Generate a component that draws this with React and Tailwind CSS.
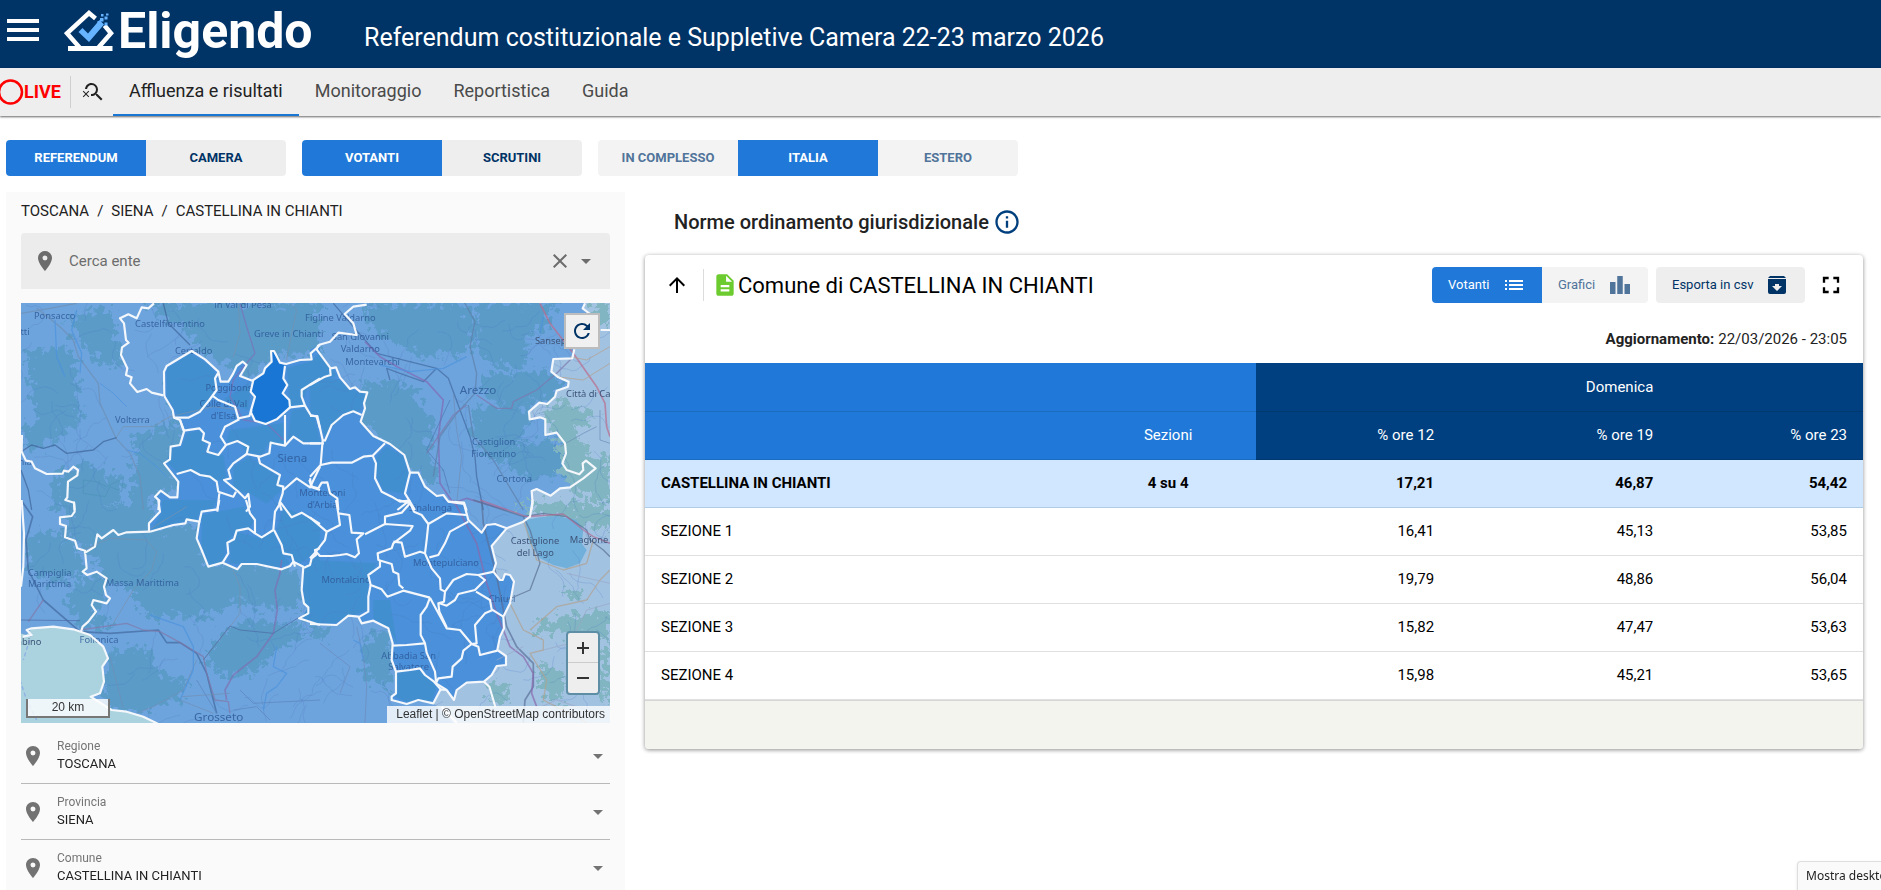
import React from "react";
import {
  MdArrowDropDown,
  MdArrowUpward,
  MdClose,
  MdDescription,
  MdFullscreen,
  MdInfoOutline,
  MdLeaderboard,
  MdList,
  MdPlace,
  MdRefresh,
  MdSearchOff,
} from "react-icons/md";

function Logo() {
  return (
    <svg className="h-[42px] w-[50px] shrink-0" viewBox="0 0 50 42" fill="none" aria-hidden="true">
      <path d="M31.500 8.500 25 3 3 23.300 16 38M40.500 15.500 47 23.300 34 38" stroke="#fff" strokeWidth="4.500" />
      <path d="M4 36h44.500v5H4z" fill="#fff" />
      <path d="m14.500 22 4-4 5.500 5.500L35.500 10l4.500 4.500L25 32z" fill="#66b3ff" />
      <path d="M36 8h3.500v3.500H36zM40.500 12.500h3v3h-3zM37 4h2.500v2.500H37zM40.500 6.500h3v3h-3zM42 3.500h2.500v2H42zM33.500 11h3v3h-3z" fill="#66b3ff" />
    </svg>
  );
}

function ArchiveDown({ className }) {
  return (
    <svg className={className} viewBox="0 0 24 24" fill="currentColor" aria-hidden="true">
      <path d="M5 3h14l2 2H3zM3 6h18v13a2 2 0 0 1-2 2H5a2 2 0 0 1-2-2zm7 5v2H7l5 5 5-5h-3v-2z" />
    </svg>
  );
}

const tabs = ["Affluenza e risultati", "Monitoraggio", "Reportistica", "Guida"];

const toggles = [
  [["REFERENDUM", true], ["CAMERA", false]],
  [["VOTANTI", true], ["SCRUTINI", false]],
  [["IN COMPLESSO", null], ["ITALIA", true], ["ESTERO", null]],
];

const tone = (on) =>
  on ? "bg-[#2079d8] text-white" : on === false ? "bg-[#eeeeee] text-[#003366]" : "bg-[#f3f3f3] text-[#50749a]";

/* The map is drawn on four sheets that share one canvas of 1767 x 1260 units. */
const woodsNW = [
  "M80 200 150 170 215 190 240 300 220 350 260 380 180 440 120 470 63 480 63 440 110 380 90 300z",
  "M430 40 960 40 960 190 880 205 830 190 760 260 690 230 600 190 560 110 500 90z",
  "M200 90 330 50 360 160 370 230 300 220 240 150z",
  "M400 440 540 390 550 460 490 520 530 560 530 620 470 600 440 660 380 660 400 560z",
  "M160 560 250 520 370 570 360 640 240 660 160 660z",
  "M500 240 640 240 640 320 560 380 520 370z",
];
const woodsNE = [
  "M160 40 460 40 500 110 470 190 350 200 250 160 180 110z",
  "M500 40 740 40 700 110 640 170 650 230 560 230 500 180z",
  "M160 270 300 290 370 400 350 480 400 560 350 590 300 530 200 440 150 390z",
  "M480 360 620 330 660 390 620 470 720 440 760 500 750 560 640 560 560 510 500 470z",
  "M520 250 720 250 770 280 700 340 640 350 560 330 510 300z",
];
const woodsSW = [
  "M75 110 180 90 240 150 250 220 160 250 90 210z",
  "M200 20 470 20 440 95 600 70 610 190 900 200 900 330 700 310 620 350 440 350 400 280 320 240 260 140 200 110z",
  "M200 290 250 220 320 240 320 310 270 340 330 350 320 390 240 390z",
  "M320 460 440 440 480 520 560 540 540 600 420 640 330 620 300 590 310 500z",
  "M640 420 760 350 850 380 900 350 910 420 830 450 760 520 670 530 620 480z",
];
const woodsSE = [
  "M180 400 240 390 250 510 240 570 180 540 150 470z",
  "M0 380 30 370 60 400 20 420z",
];
const woodsOut = [
  "M690 370 760 330 860 380 790 430 850 500 900 500 900 640 780 600 750 540 740 440z",
  "M840 40 900 40 900 110 850 100z",
];
const woodsOutSouth = [
  "M600 20 760 0 900 20 900 90 780 70 690 40z",
  "M760 350 900 330 900 420 760 400 650 400 700 370z",
  "M690 490 770 520 760 600 730 620 690 560z",
  "M540 540 600 560 590 610 540 610z",
  "M860 450 900 440 900 620 880 600z",
  "M760 260 820 280 800 300 770 290z",
];

const edgeNW = [
  "M462 40 445 55 425 52 410 85 385 73 360 85 372 100 378 150 386 158 366 172 363 195 382 235 378 255 395 262 390 280 412 306 440 297 455 308 490 316",
  "M66 435 65 485 78 512 95 515 105 535 140 552 188 551 192 542 205 545 220 530 234 540 232 556 204 575 202 622 196 630 222 638 224 660",
];
const edgeNE =
  "M825 40 818 55 840 72M900 120 872 120M793 178 787 205 730 207 724 245 745 262 776 275 774 290 740 302 735 320 712 342 688 338 657 365 659 388 690 382 706 388 706 435 740 428 765 460 768 490 757 520 770 540 808 553 820 540 818 520 828 512 857 535 820 565 780 592 750 595 722 617 680 597 665 603 668 640 664 662";
const siena = {
  nw: "M493 318 492 245 500 228 575 183 615 208 655 245 662 275 685 275 700 250 710 228 728 215 740 225 720 258 757 272 790 250 795 235 815 215 813 183 822 183 840 218 858 222 900 210 935 208 932 190 960 165",
  ne: "M25 165 60 155 85 128 140 135 130 100 104 72 130 50 170 44",
  east: "M20 178 62 235 78 232 90 262 120 297 135 292 150 305 172 307 162 340 165 355 152 395 190 438 240 462 283 495 300 548 325 548 345 590 380 618 400 615 415 635 462 638 470 662",
  se: "M415 5 462 12 475 60 515 98 530 75 555 72 590 85 545 138 558 190 550 215 570 240 578 240 585 222 600 225 612 245 600 310 580 350 582 385 570 410 562 450 588 468 588 495 560 498 545 525 522 545 470 548 440 570 432 600 410 570 392 568 370 610 325 600 290 612 245 600 245 590 258 580 258 515 245 480 248 430 235 385 190 362 155 370 145 350 115 347 80 375 0 372",
  sw: "M960 375 897 355 925 340 925 322 912 310 905 270 910 200 880 185 870 198 845 208 770 192 725 192 712 208 668 188 625 200 605 150 590 115 598 65 560 58 556 70 520 75 450 95",
  west: "M475 660 478 632 465 620 482 602 510 622 532 622 535 575 492 520 510 508 512 470 540 465 552 425 540 390 522 383 518 360 493 318",
};
const inner = {
  nw: [
    "M522 383 565 383 600 365 628 330 650 300 645 265 655 248M636 316 655 330 705 350 715 385 748 378 755 360",
    "M855 228 850 265 862 285 848 310 868 330 870 352 830 388 797 402 765 392 752 365 765 320 752 305 760 270",
    "M540 390 552 422 598 415 612 430 608 450 630 460 622 485 655 495 678 465 662 440 675 410 718 388",
    "M678 465 712 453 745 470 740 492 780 500 808 490 812 458 855 467 855 375M870 352 915 347 932 375 950 380 960 415M855 467 880 440 910 460 960 460",
    "M740 492 700 520 685 540 692 565 672 570 715 605 735 625 745 612 750 650 738 665M775 500 780 520 840 555 832 585 850 590 848 610 838 640 845 662",
    "M530 552 572 540 600 555 630 560 650 575 655 605 700 620 708 605M658 610 652 665M850 600 890 565 930 592 955 540 960 530M960 265 905 300 905 320 915 347",
    "M928 570 935 592 960 600",
  ],
  ne: [
    "M0 285 45 260 62 255 60 235M0 378 22 378 38 450 45 452 65 405 100 375 130 364 155 375M38 450 32 525 0 560",
    "M0 460 42 460M32 525 65 518 125 518 160 500 188 497 225 460M188 497 198 520 195 565 215 605 245 620 270 635 298 632 262 660",
    "M300 548 285 610 298 632 315 660M0 565 5 590 25 595 35 578 52 577 60 610 82 625 85 660",
  ],
  sw: [
    "M475 0 480 35 447 70 447 96M658 0 652 28 605 35 597 70M738 0 750 40 765 60 765 100 785 112 820 90 825 35 842 8 875 52 905 38 960 72",
    "M765 100 745 85 710 92 702 118 682 128 685 160 668 188M822 90 845 135 850 160 875 165 885 200M912 203 930 195 935 175 948 165 945 150 960 145",
  ],
  se: [
    "M0 52 50 95 45 120 18 155 30 168 65 168 90 165 110 162 135 172 147 160 140 118 160 100 125 98 118 45 85 40 90 75 50 95M85 40 78 0",
    "M18 155 0 175M165 103 225 72 308 78 300 92 250 130 245 145 203 160 205 180 245 192 250 215 265 222 268 255 280 265M210 180 210 200 175 225 182 255 215 268 232 290 280 272 360 293",
    "M250 125 275 128 285 170 330 155 345 160 350 120 355 72 410 40 470 45M298 5 312 35 335 45 355 72M225 72 225 50 275 38 300 10 265 0M358 172 385 165 405 130 420 95 475 65",
    "M345 160 365 205 390 235 392 268 405 275 430 240 470 222 505 225 525 240 495 270 445 282 435 300 410 317 385 308M405 275 402 305 385 310 388 335 410 382M498 275 540 300 545 328 580 350M505 225 552 215",
    "M360 293 350 320 332 345 332 405 345 430 350 458 375 515 378 545M360 293 380 330 410 385 450 390 485 432 500 430 495 375 525 340 548 330M485 432 460 452 455 475 428 500 425 530 385 535 378 550 410 570",
    "M485 432 505 440 510 465 562 452M248 437 290 435 343 430M258 515 300 510 330 505 345 525 372 545 392 568M182 255 175 290 175 335 145 352M522 545 538 560 550 600 556 622M395 620 440 668",
  ],
};

const roads = {
  nw: [
    ["M63 70 150 55 230 40M110 55 180 110 220 150 235 200 295 280 300 340 348 445 390 490 420 560 430 660", "#6e8eb4", 4],
    ["M490 40 505 100 570 165", "#3d6499", 4],
    ["M63 485 95 465 130 475 165 465 200 490 280 480 310 455 350 443", "#3d6499", 4],
    ["M720 40 740 110 765 190 735 225 700 270 690 320 730 390 800 400 850 450", "#7d70b8", 4],
    ["M350 440 370 410 460 410 510 380 640 350 720 360M870 40 890 60 865 180 860 210M715 40 720 130 700 200", "#7791ae", 3],
    ["M165 90 170 200 195 260M230 60 215 120 245 190 240 250", "#4c93dd", 4],
    ["M300 280 340 310 380 350M380 480 420 490 470 530 500 560", "#4c93dd", 3],
    ["M63 540 85 600 95 660", "#3d6499", 4],
    ["M250 570 290 575 320 590 370 565 365 605 330 590 315 620 250 610z", "#4f93b8", 3],
  ],
  ne: [
    ["M70 40 130 110 200 190 380 235 415 265 480 440 495 500 500 560 520 660M380 235 340 275 270 250 230 235 240 270", "#42699f", 4],
    ["M165 155 210 200 270 235 350 275 400 330 385 440 390 580 430 640 470 625 590 660", "#8069b5", 5],
    ["M465 40 495 95 480 170 500 250 495 310 440 370 390 440 370 560M475 345 490 440 550 510 640 660", "#5c7fa8", 4],
    ["M690 40 720 100 790 190 860 290 885 340 890 410 900 440", "#bb6c8c", 5],
    ["M500 315 560 355 605 355 610 335 680 300 740 250 790 200M350 490 430 375 470 345", "#7c78ac", 4],
    ["M870 360 870 450 900 460M750 470 820 430 860 410M430 310 440 420 455 500 440 640", "#6d8fb8", 3],
    ["M740 260 820 270 900 220M780 200 830 210 900 170", "#b5a08a", 3],
    ["M210 225 300 245 400 235 470 200M700 80 690 130", "#4c93dd", 4],
    ["M350 480 420 330M350 480 400 540 420 610", "#4f78b2", 3],
  ],
  sw: [
    ["M63 0 98 50 78 120 85 210 130 300 240 395 330 400 475 390 500 428 540 428 590 460 620 520 650 640", "#42699f", 5],
    ["M85 365 130 300M240 390 380 370 430 390 480 395 545 430 610 470 620 520 645 600 685 605 690 640", "#8078a8", 4],
    ["M845 180 840 220 825 270 832 330 820 400 770 470 700 525 675 570 680 600", "#7d70b0", 5],
    ["M250 150 330 115 440 120 470 155 455 210 400 270 340 370M560 20 430 100M700 210 720 260 720 340 690 380 610 480", "#7791ae", 3],
    ["M610 480 690 378 720 390 820 400 900 350M63 360 240 362", "#4d6ca4", 3],
    ["M330 470 370 625M410 640 460 620 550 570 590 480M545 590 690 580M540 600 640 640", "#718eb5", 3],
    ["M450 345 550 380 580 440 580 510 540 600M830 440 820 500 860 520 830 560 800 580 790 630", "#4c93dd", 4],
    ["M590 540 650 640M720 570 760 610 960 600M700 630 770 620 810 660", "#5c84be", 3],
  ],
  se: [
    ["M515 0 520 70 560 230 590 380 620 440 670 490 670 560 645 600 640 668", "#586f98", 5],
    ["M430 0 500 130 530 250 560 340 600 440 640 470 670 520 665 580 680 620", "#8a69ad", 5],
    ["M490 0 640 50 660 90 690 190 660 270 590 300M640 50 700 40 770 50 830 90 840 120 880 150 900 170", "#596f92", 4],
    ["M510 0 650 50 760 42 820 90 850 110 900 130", "#b06c95", 4],
    ["M600 310 640 390 700 420 700 450 660 460 710 540 700 600 830 668M660 390 740 320 830 300 870 240 900 210M640 60 680 180 760 210 830 190 850 120", "#b1a18f", 4],
    ["M650 640 740 600 860 640M560 480 640 440M700 450 780 430 830 330 900 310M770 220 900 250", "#9aa8c6", 3],
    ["M140 380 160 470 170 560 165 668M30 430 120 500 90 580", "#6b8bbb", 3],
    ["M160 480 150 430 130 420", "#4c93dd", 4],
  ],
};

const labels = [
  [164, 88, 28, "Ponsacco"], [75, 134, 28, "tti"], [510, 110, 28, "Castelfiorentino"], [729, 55, 28, "in Val di Pesa"],
  [581, 192, 28, "Certaldo"], [866, 142, 28, "Greve in Chianti"], [1021, 93, 28, "Figline Valdarno"], [1081, 150, 28, "San Giovanni"],
  [1081, 186, 28, "Valdarno"], [1118, 225, 28, "Montevarchi"], [690, 304, 28, "Poggibonsi"], [670, 350, 28, "Colle di Val"],
  [670, 386, 28, "d'Elsa"], [397, 398, 28, "Volterra"], [877, 516, 35, "Siena"], [76, 524, 28, "nia"],
  [1434, 312, 35, "Arezzo"], [1481, 464, 28, "Castiglion"], [1481, 500, 28, "Fiorentino"], [1543, 575, 28, "Cortona"],
  [967, 617, 28, "Monteroni"], [967, 653, 28, "d'Arbia"], [1291, 662, 28, "Sinalunga"], [149, 857, 28, "Campiglia"],
  [149, 892, 28, "Marittima"], [427, 888, 28, "Massa Marittima"], [297, 1060, 28, "Follonica"], [656, 1294, 35, "Grosseto"],
  [1338, 827, 28, "Montepulciano"], [1038, 878, 28, "Montalcino"], [1506, 936, 28, "Chiusi"], [1226, 1106, 28, "Abbadia San"],
  [1226, 1141, 28, "Salvatore"],
];
const outerLabels = [
  [1685, 161, 28, "Sansepolcro"], [1800, 320, 28, "Città di Castello"], [1605, 763, 28, "Castiglione"], [1606, 798, 28, "del Lago"],
  [1767, 759, 28, "Magione"], [82, 1065, 28, "mbino"],
];

/* Minor streets: a repeatable web of short bent lines. */
function minorStreets() {
  let seed = 17;
  const rnd = () => {
    seed = (seed * 16807) % 2147483647;
    return seed / 2147483647;
  };
  let d = "";
  for (let i = 0; i < 230; i++) {
    let x = 63 + rnd() * 1767;
    let y = 39 + rnd() * 1260;
    let a = rnd() * 6.3;
    d += `M${Math.round(x)} ${Math.round(y)}`;
    for (let k = 0; k < 9; k++) {
      a += (rnd() - 0.5) * 1.5;
      x += Math.cos(a) * 15;
      y += Math.sin(a) * 15;
      d += `L${Math.round(x)} ${Math.round(y)}`;
    }
  }
  return d;
}
const streets = minorStreets();

const S = { nw: undefined, ne: "translate(930 0)", sw: "translate(0 630)", se: "translate(930 630)" };

function Woods({ sheet, shapes, fill }) {
  return (
    <g transform={S[sheet]} fill={fill}>
      {shapes.map((d) => <path key={d} d={d} />)}
    </g>
  );
}

function TuscanyMap() {
  return (
    <svg className="block h-full w-full" viewBox="63 39 1767 1260" preserveAspectRatio="xMidYMid slice" role="img" aria-label="Mappa della provincia di Siena">
      <defs>
        <filter id="ragged" x="-10%" y="-10%" width="120%" height="120%">
          <feTurbulence type="fractalNoise" baseFrequency="0.045" numOctaves="4" seed="8" result="n" />
          <feDisplacementMap in="SourceGraphic" in2="n" scale="90" xChannelSelector="R" yChannelSelector="G" />
        </filter>
      </defs>
      <rect x="63" y="39" width="1767" height="1260" fill="#6ea4dd" />
      <g filter="url(#ragged)">
        <Woods sheet="nw" shapes={woodsNW} fill="#5a9bc8" />
        <Woods sheet="ne" shapes={woodsNE} fill="#5a9bc8" />
        <Woods sheet="sw" shapes={woodsSW} fill="#5a9bc8" />
        <Woods sheet="se" shapes={woodsSE} fill="#5a9bc8" />
      </g>
      <g fill="#a2c2e2">
        <path transform={S.ne} d={"M910 30 825 30 818 55 840 72 793 178" + edgeNE.slice(edgeNE.indexOf("M793") + 8) + "L910 662z"} />
        <path transform={S.se} d="M668 0 660 50 640 65 590 85 545 138 558 190 550 215 570 240 585 222 600 225 612 245 600 310 580 350 582 385 562 450 588 468 588 495 560 498 545 525 522 545 470 548 440 570 432 600 410 570 392 568 370 610 440 680 910 680 910 0z" />
      </g>
      <g filter="url(#ragged)">
        <Woods sheet="ne" shapes={woodsOut} fill="#80b5c1" />
        <Woods sheet="se" shapes={woodsOutSouth} fill="#80b5c1" />
      </g>
      <path transform={S.se} d="M645 60 690 52 740 48 800 60 820 90 815 130 830 150 810 190 770 205 730 195 690 175 655 120z" fill="#72b0dc" />
      <g fill="#4a90da">
        <path d={siena.nw + "L960 760 475 660 478 632 465 620 482 602 510 622 532 622 535 575 492 520 510 508 512 470 540 465 552 425 540 390 522 383 518 360z"} />
        <path transform={S.ne} d="M25 165 20 178 62 235 78 232 90 262 120 297 135 292 150 305 172 307 162 340 165 355 152 395 190 438 240 462 283 495 300 548 325 548 345 590 380 618 400 615 415 635 462 638 470 700 0 700 0 180z" />
        <path transform={S.se} d={siena.se.replace("M415 5", "M0 0L415 5") + "z"} />
        <path transform={S.sw} d={siena.sw + "L447 70 480 35 475 0 960 0z"} />
      </g>
      <g fill="#428fcf">
        <path d="M500 235 570 190 630 225 650 260 640 310 610 360 535 380 500 320z" />
        <path d="M745 280 752 300 745 360 700 340 670 330 700 310zM860 235 930 215 960 190 990 230 1010 255 920 295 905 345 870 345z" />
        <path d="M560 430 600 420 615 455 620 490 670 495 680 570 640 570 570 545 535 550 500 515 515 475 545 470z" />
        <path d="M690 420 850 400 850 460 800 465 790 495 740 490 720 455 680 455z" />
        <path d="M875 360 920 355 945 385 960 455 910 455 880 435 862 450z" />
        <path d="M700 530 750 500 775 520 835 560 845 600 800 640 750 610 700 600z" />
        <path transform={S.ne} d="M0 290 60 265 90 270 120 297 150 308 168 312 150 360 90 375 45 440 20 370 0 375zM200 500 230 470 280 500 295 550 280 610 220 600 200 560z" />
        <path transform={S.sw} d="M485 0 650 0 640 25 600 35 590 60 520 70 455 90 485 40zM605 45 730 20 760 60 750 85 710 90 680 130 670 185 625 195 605 140zM690 130 710 95 780 115 820 95 850 165 870 190 840 200 690 190zM850 150 830 90 850 20 960 70 960 150 900 190 860 170z" />
        <path transform={S.sw} d="M912 205 960 160 960 370 905 355 925 320 910 300z" />
        <path transform={S.se} d="M0 180 200 190 175 240 170 330 130 345 70 370 0 370zM190 300 240 300 260 430 245 400 190 355zM262 520 330 510 380 560 365 605 290 605 255 590z" />
      </g>
      <path d={streets} fill="none" stroke="#4d79c4" strokeOpacity="0.28" strokeWidth="2.500" />
      <g fill="none" strokeOpacity="0.7" strokeLinejoin="round">
        {Object.keys(roads).map((k) => (
          <g key={k} transform={S[k]}>
            {roads[k].map(([d, c, w]) => <path key={d} d={d} stroke={c} strokeWidth={w} />)}
          </g>
        ))}
      </g>
      <g transform={S.sw}>
        <path d="M60 400 80 405 95 385 160 380 220 388 270 405 310 440 324 475 307 500 312 545 300 580 272 590 335 630 380 635 430 650 480 680 55 680z" fill="#aad3df" />
        <path d="M95 400 70 480M60 540 80 600 110 660" fill="none" stroke="#8fb0e4" strokeWidth="4" strokeDasharray="12 8" />
      </g>
      <g fontFamily='"Noto Sans", sans-serif' textAnchor="middle">
        {labels.map(([x, y, s, t]) => <text key={t} x={x} y={y} fontSize={s} fill="#2f5a99" fillOpacity="0.85">{t}</text>)}
        {outerLabels.map(([x, y, s, t]) => <text key={t} x={x} y={y} fontSize={s} fill="#3d5478">{t}</text>)}
      </g>
      <path d="M855 228 850 265 862 285 848 310 868 330 870 352 830 388 797 402 765 392 752 365 765 320 752 305 760 270 790 250 795 235 815 215 818 183 840 218z" fill="#1976d5" />
      <g fill="none" stroke="#f4f7fb" strokeWidth="6.500" strokeLinejoin="round">
        <g>
          {edgeNW.map((d) => <path key={d} d={d} />)}
          <path d={siena.nw} />
          <path d={siena.west} />
          {inner.nw.map((d) => <path key={d} d={d} />)}
        </g>
        <g transform={S.ne}>
          <path d={edgeNE} />
          <path d={siena.ne} />
          <path d={"M25 165" + siena.east.replace("M", "L")} />
          {inner.ne.map((d) => <path key={d} d={d} />)}
        </g>
        <g transform={S.sw}>
          <path d="M222 5 224 35 215 48 180 52 180 72 198 78 195 112 225 122 232 145 255 152 260 205 248 215 262 225 290 215 320 235 312 260 318 285 330 295 320 310 280 300 275 315 288 335 265 365 248 380 243 395M252 160 285 140 292 103 305 115 340 90 355 105 380 97 450 95" />
          <path d="M65 0 72 100 70 200 63 260M68 410 95 405 80 390 95 385 160 380 220 388 270 405 310 440 324 475 307 500 312 545 300 580 272 590 335 630 380 635 430 650 475 672" />
          <path d={siena.sw} />
          {inner.sw.map((d) => <path key={d} d={d} />)}
        </g>
        <g transform={S.se}>
          <path d={siena.se} />
          <path d="M668 0 660 50 640 65 590 85" />
          {inner.se.map((d) => <path key={d} d={d} />)}
        </g>
      </g>
    </svg>
  );
}

function Place({ label, value }) {
  const id = label.toLowerCase();
  return (
    <div className="relative flex h-14 shrink-0 items-center border-b border-[#b9b9b9]">
      <MdPlace className="size-6 shrink-0 text-[#737373]" />
      <div className="flex min-w-0 flex-1 flex-col pl-3">
        <label htmlFor={id} className="text-xs leading-4 text-[#757575]">{label}</label>
        <select id={id} className="h-5 w-full appearance-none bg-transparent text-[13px] leading-5 text-[#222]">
          <option>{value}</option>
        </select>
      </div>
      <MdArrowDropDown className="pointer-events-none absolute right-0 size-6 text-[#737373]" />
    </div>
  );
}

const rows = [
  ["CASTELLINA IN CHIANTI", "4 su 4", "17,21", "46,87", "54,42"],
  ["SEZIONE 1", "", "16,41", "45,13", "53,85"],
  ["SEZIONE 2", "", "19,79", "48,86", "56,04"],
  ["SEZIONE 3", "", "15,82", "47,47", "53,63"],
  ["SEZIONE 4", "", "15,98", "45,21", "53,65"],
];

function Results() {
  return (
    <section className="overflow-hidden rounded bg-white shadow-[0_1px_4px_rgba(0,0,0,0.45)]">
      <div className="flex h-[60px] items-center px-4">
        <button type="button" aria-label="Livello superiore" className="mr-[10px] flex w-8 justify-center text-black">
          <MdArrowUpward className="size-6" />
        </button>
        <div className="h-8 border-l border-[#dcdcdc]" />
        <MdDescription className="ml-2 size-[26px] text-[#6ccb2f]" />
        <h2 className="text-[22px] text-black">Comune di CASTELLINA IN CHIANTI</h2>
        <div className="ml-auto flex items-center text-[13px]">
          <button type="button" className="flex h-9 w-[110px] items-center justify-between rounded-l bg-[#2079d8] px-4 text-white">
            Votanti <MdList className="size-6" />
          </button>
          <button type="button" className="flex h-9 w-[106px] items-center justify-between rounded-r bg-[#f3f3f3] px-4 text-[#50749a]">
            Grafici <MdLeaderboard className="size-6" />
          </button>
          <button type="button" className="ml-2 flex h-9 w-[149px] items-center justify-between rounded bg-[#eeeeee] px-4 text-[#003366]">
            Esporta in csv <ArchiveDown className="size-6" />
          </button>
          <button type="button" aria-label="Schermo intero" className="ml-3 pr-0.5 text-black">
            <MdFullscreen className="size-7" />
          </button>
        </div>
      </div>
      <p className="flex h-12 items-center justify-end gap-1 px-4 text-[15px] text-[#222]">
        <b>Aggiornamento:</b> 22/03/2026 - 23:05
      </p>
      <table className="w-full table-fixed border-collapse text-[15px] text-black">
        <colgroup>
          <col className="w-[35.7%]" />
          <col className="w-[14.5%]" />
          <col className="w-[15.9%]" />
          <col className="w-[18%]" />
          <col className="w-[15.9%]" />
        </colgroup>
        <thead className="text-white">
          <tr className="h-12">
            <th colSpan={2} className="border-b border-[#1b6bbf] bg-[#2079d8]" />
            <th className="border-b border-[#00386f] bg-[#004080]" />
            <th className="border-b border-[#00386f] bg-[#004080] px-4 text-right font-normal">Domenica</th>
            <th className="border-b border-[#00386f] bg-[#004080]" />
          </tr>
          <tr className="h-12">
            <th className="border-b border-[#1b6bbf] bg-[#2079d8]" />
            <th className="border-b border-[#1b6bbf] bg-[#2079d8] px-4 text-center font-normal">Sezioni</th>
            {["% ore 12", "% ore 19", "% ore 23"].map((t) => (
              <th key={t} className="border-b border-[#00386f] bg-[#004080] px-4 text-right font-normal">{t}</th>
            ))}
          </tr>
        </thead>
        <tbody>
          {rows.map((r, i) => (
            <tr key={r[0]} className={i === 0 ? "h-12 border-b border-[#aecbe8] bg-[#d1e6ff] font-bold" : "h-12 border-b border-[#e0e0e0]"}>
              <td className="px-4">{r[0]}</td>
              <td className="px-4 text-center">{r[1]}</td>
              <td className="px-4 text-right">{r[2]}</td>
              <td className="px-4 text-right">{r[3]}</td>
              <td className="px-4 text-right">{r[4]}</td>
            </tr>
          ))}
        </tbody>
      </table>
      <div className="h-[49px] border-t border-[#d6d6d6] bg-[#f3f4ed]" />
    </section>
  );
}

export default function App() {
  return (
    <div className="flex h-screen flex-col overflow-hidden bg-white font-['Roboto',sans-serif] text-[#222]">
      <header className="flex h-[68px] shrink-0 items-center bg-[#003366] pl-[7px] text-white">
        <button type="button" aria-label="Menu" className="mb-2 flex w-8 flex-col gap-[5px]">
          <span className="h-1 w-full bg-white" />
          <span className="h-1 w-full bg-white" />
          <span className="h-1 w-full bg-white" />
        </button>
        <a href="#" className="mb-1.5 ml-[25px] flex items-center gap-1">
          <Logo />
          <span className="w-[200px] text-[50px] leading-[62px] font-bold">Eligendo</span>
        </a>
        <h1 className="ml-[46px] pt-2 text-[25px] leading-8">Referendum costituzionale e Suppletive Camera 22-23 marzo 2026</h1>
      </header>

      <nav className="relative flex h-12 shrink-0 items-stretch bg-[#eeeeee] shadow-[0_1px_2px_rgba(0,0,0,0.6)]">
        <a href="#" className="flex w-[70px] items-center gap-1 overflow-hidden text-lg font-bold text-[#fe0000]">
          <svg className="-ml-0.5 size-[26px] shrink-0" viewBox="0 0 26 26" fill="none" stroke="currentColor" strokeWidth="2.500" aria-hidden="true">
            <circle cx="12.500" cy="13" r="11.500" />
          </svg>
          <span className="-ml-1">LIVE</span>
        </a>
        <div className="my-2 border-l border-[#cfcfcf]" />
        <button type="button" aria-label="Ricerca" className="flex w-[42px] items-center justify-center pl-1 text-[#222]">
          <MdSearchOff className="size-6" />
        </button>
        {tabs.map((t, i) => (
          <a key={t} href="#" className={i === 0 ? "flex items-center border-b-2 border-[#1976d2] px-4 text-lg text-[#222]" : "flex items-center border-b-2 border-transparent px-4 text-lg text-[#4a4a4a]"}>
            {t}
          </a>
        ))}
      </nav>

      <div className="flex shrink-0 gap-4 px-[6px] pt-6 pb-4">
        {toggles.map((group) => (
          <div key={group[0][0]} className="flex overflow-hidden rounded">
            {group.map(([t, on]) => (
              <button key={t} type="button" className={`h-9 w-[140px] text-[13px] font-bold ${tone(on)}`}>{t}</button>
            ))}
          </div>
        ))}
      </div>

      <main className="flex min-h-0 flex-1 gap-5 pr-[18px] pl-[6px]">
        <aside className="flex w-1/3 shrink-0 flex-col bg-[#fafafa] px-[15px]">
          <div className="flex h-[41px] shrink-0 items-center gap-2 pb-0.5 text-[15px]">
            <a href="#">TOSCANA</a>/<a href="#">SIENA</a>/<a href="#">CASTELLINA IN CHIANTI</a>
          </div>
          <div className="flex h-14 shrink-0 items-center rounded-t bg-[#ececec] px-3 text-[#6c6c6c]">
            <MdPlace className="size-6 shrink-0" />
            <input type="text" aria-label="Cerca ente" placeholder="Cerca ente" className="ml-3 min-w-0 flex-1 bg-transparent text-[15px] outline-none placeholder:text-[#6c6c6c]" />
            <button type="button" aria-label="Cancella"><MdClose className="size-6" /></button>
            <button type="button" aria-label="Apri elenco" className="ml-0.5"><MdArrowDropDown className="size-6" /></button>
          </div>
          <div className="relative mt-[14px] h-[420px] shrink-0 overflow-hidden">
            <TuscanyMap />
            <button type="button" aria-label="Ricarica mappa" className="absolute top-[10px] right-[10px] flex size-9 items-center justify-center border-2 border-[#bdbdbd] bg-[#f0f0f0] text-[#003366]">
              <MdRefresh className="size-6" />
            </button>
            <div className="absolute right-[10px] bottom-7 flex flex-col overflow-hidden rounded border-2 border-[#5d8ea6] bg-[#eeeeee] text-[#333]">
              <button type="button" aria-label="Ingrandisci" className="flex h-[30px] w-[30px] items-center justify-center border-b border-[#ccc]">
                <svg className="size-3" viewBox="0 0 12 12" stroke="currentColor" strokeWidth="2"><path d="M0 6h12M6 0v12" /></svg>
              </button>
              <button type="button" aria-label="Riduci" className="flex h-[30px] w-[30px] items-center justify-center">
                <svg className="size-3" viewBox="0 0 12 12" stroke="currentColor" strokeWidth="2"><path d="M0 6h12" /></svg>
              </button>
            </div>
            <div className="absolute bottom-[5px] left-[5px] h-[19px] w-[84px] border-2 border-t-0 border-[#777] bg-white/80 text-center font-['Liberation_Sans',sans-serif] text-xs leading-4 text-[#333]">20 km</div>
            <div className="absolute right-0 bottom-0 bg-white/80 px-[5px] font-['Liberation_Sans',sans-serif] text-xs leading-[17px] text-[#333]">
              <a href="#" className="pl-1">Leaflet</a> | © <a href="#">OpenStreetMap</a> contributors
            </div>
          </div>
          <div className="flex shrink-0 flex-col pt-[5px]">
            <Place label="Regione" value="TOSCANA" />
            <Place label="Provincia" value="SIENA" />
            <Place label="Comune" value="CASTELLINA IN CHIANTI" />
          </div>
        </aside>

        <div className="min-w-0 flex-1">
          <div className="flex h-[63px] items-center gap-1 pb-1 pl-[29px] text-xl font-medium">
            Norme ordinamento giurisdizionale
            <button type="button" aria-label="Informazioni" className="text-[#003f7d]"><MdInfoOutline className="size-7" /></button>
          </div>
          <Results />
        </div>
      </main>

      <div className="fixed right-0 bottom-0 h-[29px] w-[84px] overflow-hidden rounded-tl border-t border-l border-[#dedede] bg-[#fafafa] pl-2 font-['Noto_Sans',sans-serif] text-xs leading-7 whitespace-nowrap text-[#222] shadow">
        Mostra desktop
      </div>
    </div>
  );
}
